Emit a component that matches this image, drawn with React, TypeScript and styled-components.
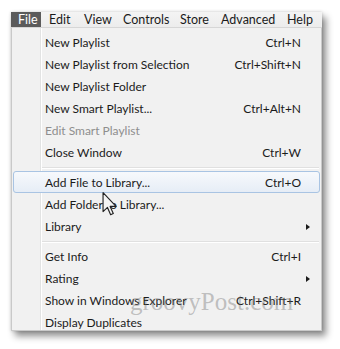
import React from "react";
import styled, { createGlobalStyle } from "styled-components";

const Global = createGlobalStyle`
  html, body { margin: 0; padding: 0; background: #ffffff; }
  body { font-family: Lato, "Noto Sans", sans-serif; }
`;

const Stage = styled.div`
  width: 340px;
  height: 349px;
  padding: 12px 0 0 11px;
  box-sizing: border-box;
  overflow: hidden;
`;

const Window = styled.div`
  position: relative;
  width: 311px;
  box-shadow: 4px 5px 7px rgba(0, 0, 0, 0.45), 0 0 3px rgba(0, 0, 0, 0.18);
`;

const MenuBar = styled.div`
  display: flex;
  height: 15px;
  background: linear-gradient(#f4f4f4, #ececec);
  border-bottom: 1px solid #d6d6d6;
  font-size: 12.5px;
  color: #1b1b1b;
`;

const BarItem = styled.div<{ $active?: boolean; $w: number }>`
  width: ${(p) => p.$w}px;
  display: flex;
  align-items: center;
  padding-left: ${(p) => (p.$active ? 7 : 8)}px;
  box-sizing: border-box;
  line-height: 15px;
  white-space: nowrap;
  background: ${(p) => (p.$active ? "#5b5b5b" : "transparent")};
  color: ${(p) => (p.$active ? "#ffffff" : "#1b1b1b")};
`;

const Panel = styled.div`
  box-sizing: border-box;
  padding-top: 3px;
  border: 1px solid #c9c9c9;
  border-top: none;
  background: linear-gradient(
    to right,
    #f1f1f1 28px,
    #e2e3e3 28px,
    #e2e3e3 29px,
    #ffffff 29px,
    #ffffff 30px,
    #f1f1f1 30px
  );
  font-size: 12px;
`;

const Row = styled.div<{ $hover?: boolean; $disabled?: boolean }>`
  height: 22px;
  box-sizing: border-box;
  margin: 0 1px;
  display: grid;
  grid-template-columns: 1fr auto 18px;
  align-items: start;
  padding: 3px 0 0 31px;
  line-height: 16px;
  border: 1px solid ${(p) => (p.$hover ? "#a9c4e3" : "transparent")};
  border-radius: 3px;
  background: ${(p) =>
    p.$hover ? "linear-gradient(#f7f9fc, #e6edf6)" : "transparent"};
  color: ${(p) => (p.$disabled ? "#8e8e8e" : "#1b1b1b")};
  white-space: nowrap;
  &:last-child {
    height: 19px;
  }
`;

const Label = styled.span``;

const Shortcut = styled.span`
  text-align: right;
`;

const ArrowCell = styled.span`
  display: flex;
  align-items: center;
  height: 16px;
  padding-left: 5px;
`;

const Arrow = styled.span`
  width: 0;
  height: 0;
  border-top: 3.5px solid transparent;
  border-bottom: 3.5px solid transparent;
  border-left: 4px solid #1b1b1b;
`;

const Separator = styled.div`
  height: 8px;
  margin-left: 30px;
  margin-right: 2px;
  display: flex;
  align-items: center;
  &::before {
    content: "";
    display: block;
    width: 100%;
    height: 1px;
    background: #e0e0e0;
    box-shadow: 0 1px 0 #ffffff;
  }
`;

const Cursor = styled.svg`
  position: absolute;
  left: 91px;
  top: 180px;
`;

const Watermark = styled.div`
  position: absolute;
  left: 119px;
  top: 277px;
  font-family: "Liberation Serif", "DejaVu Serif", serif;
  font-size: 25px;
  line-height: 1;
  color: rgba(110, 110, 110, 0.4);
  pointer-events: none;
  white-space: nowrap;
`;

type Item =
  | { sep: true }
  | {
      sep?: false;
      label: string;
      shortcut?: string;
      sub?: boolean;
      hover?: boolean;
      disabled?: boolean;
    };

const items: Item[] = [
  { label: "New Playlist", shortcut: "Ctrl+N" },
  { label: "New Playlist from Selection", shortcut: "Ctrl+Shift+N" },
  { label: "New Playlist Folder" },
  { label: "New Smart Playlist...", shortcut: "Ctrl+Alt+N" },
  { label: "Edit Smart Playlist", disabled: true },
  { label: "Close Window", shortcut: "Ctrl+W" },
  { sep: true },
  { label: "Add File to Library...", shortcut: "Ctrl+O", hover: true },
  { label: "Add Folder to Library..." },
  { label: "Library", sub: true },
  { sep: true },
  { label: "Get Info", shortcut: "Ctrl+I" },
  { label: "Rating", sub: true },
  { label: "Show in Windows Explorer", shortcut: "Ctrl+Shift+R" },
  { label: "Display Duplicates" },
];

const bar: { label: string; w: number; active?: boolean }[] = [
  { label: "File", w: 30, active: true },
  { label: "Edit", w: 35 },
  { label: "View", w: 39 },
  { label: "Controls", w: 57 },
  { label: "Store", w: 41 },
  { label: "Advanced", w: 66 },
  { label: "Help", w: 43 },
];

export default function App() {
  return (
    <Stage>
      <Global />
      <Window>
        <MenuBar>
          {bar.map((b) => (
            <BarItem key={b.label} $active={b.active} $w={b.w}>
              {b.label}
            </BarItem>
          ))}
        </MenuBar>
        <Panel>
          {items.map((it, i) =>
            it.sep ? (
              <Separator key={i} />
            ) : (
              <Row key={i} $hover={it.hover} $disabled={it.disabled}>
                <Label>{it.label}</Label>
                <Shortcut>{it.shortcut ?? ""}</Shortcut>
                <ArrowCell>{it.sub ? <Arrow /> : null}</ArrowCell>
              </Row>
            )
          )}
        </Panel>
        <Cursor width="16" height="24" viewBox="0 0 12 19">
          <path
            d="M0.5 0.5 L0.5 15.5 L4 12.2 L6.5 18 L8.6 17.1 L6.1 11.4 L10.8 11.4 Z"
            fill="#f4f4f4"
            stroke="#222"
            strokeWidth="0.9"
            strokeLinejoin="round"
          />
        </Cursor>
        <Watermark>groovyPost.com</Watermark>
      </Window>
    </Stage>
  );
}
